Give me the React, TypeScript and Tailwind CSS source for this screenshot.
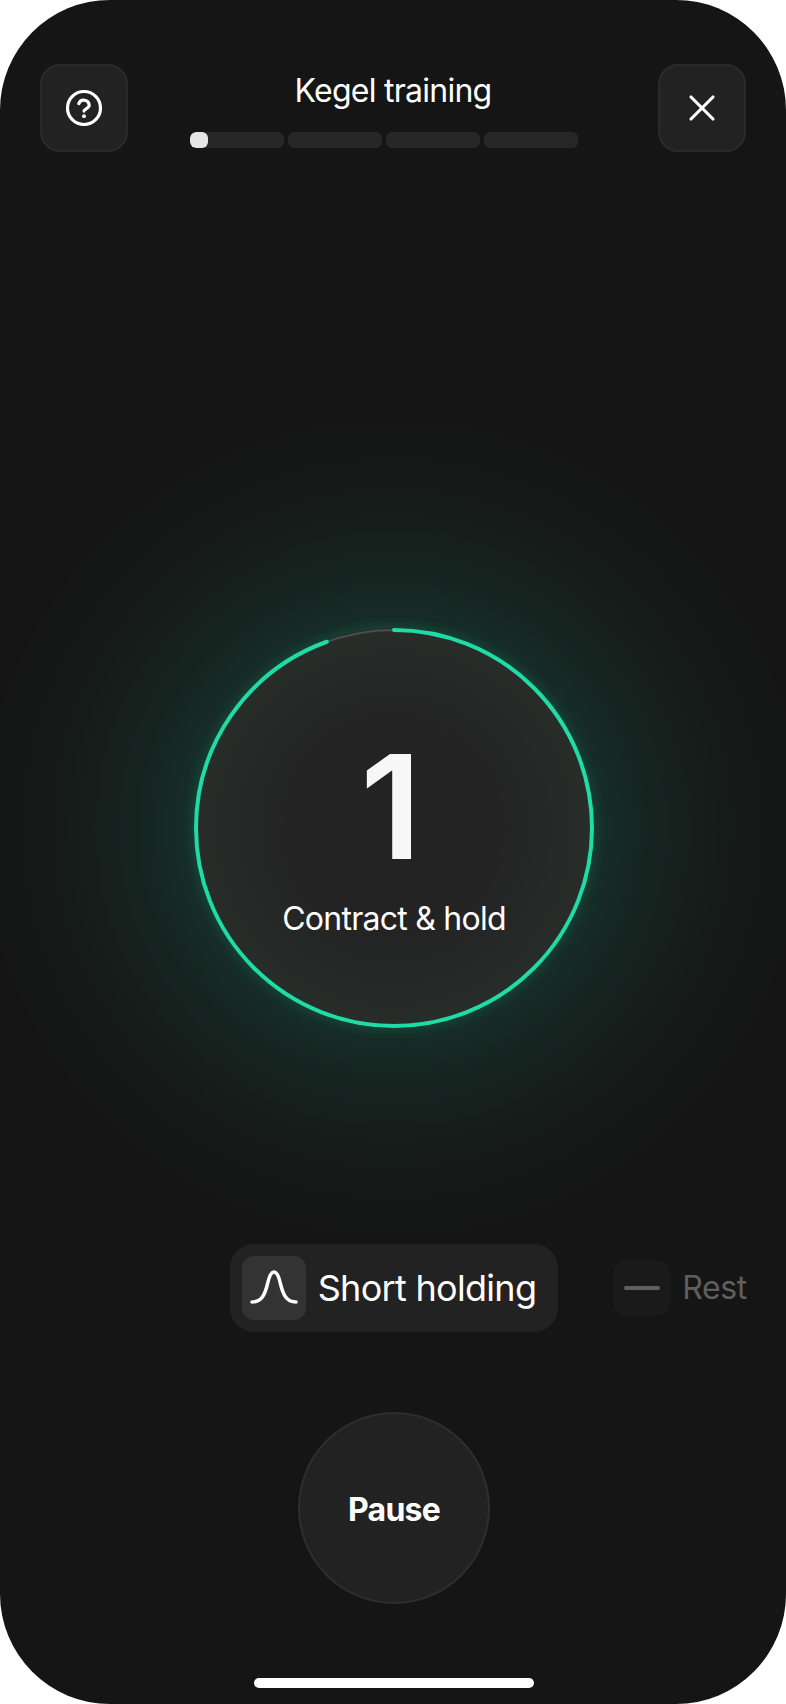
import { X } from 'lucide-react'
import React from 'react'

const segments = [0, 1, 2, 3]

function IconButton({ children }: { children: React.ReactNode }) {
  return (
    <button className="flex h-[88px] w-[88px] items-center justify-center rounded-[20px] border-2 border-[#2a2a2a] bg-[#222222] text-white">
      {children}
    </button>
  )
}

function HelpIcon() {
  return (
    <svg width="40" height="40" viewBox="0 0 40 40" fill="none" stroke="currentColor" strokeLinecap="round" strokeLinejoin="round">
      <circle cx="20" cy="20" r="16.5" strokeWidth="3.2" />
      <path d="M14.8 15.6a5.4 5.4 0 0 1 10.4 1.7c0 3.2-5.2 3.8-5.2 5.8" strokeWidth="3.2" />
      <circle cx="20" cy="28.2" r="1.9" fill="currentColor" stroke="none" />
    </svg>
  )
}

function PeakIcon() {
  return (
    <svg width="48" height="36" viewBox="0 0 48 36" fill="none" stroke="#ffffff" strokeWidth="3.5" strokeLinecap="round">
      <path d="M2 32C12 32 15 24 17.5 14C19 7 21 2 24 2C27 2 29 7 30.5 14C33 24 36 32 46 32" />
    </svg>
  )
}

function Ring() {
  return (
    <svg className="absolute inset-0" width="400" height="400" viewBox="0 0 400 400" fill="none">
      <circle cx="200" cy="200" r="198" stroke="#47504d" strokeWidth="2" />
      <circle
        cx="200"
        cy="200"
        r="198"
        stroke="#1fdca6"
        strokeWidth="4"
        strokeLinecap="round"
        strokeDasharray="1175 1244"
        transform="rotate(-90 200 200)"
      />
    </svg>
  )
}

export default function App() {
  return (
    <div className="flex h-[1704px] w-[786px] flex-col items-stretch bg-white font-['Inter',sans-serif]">
      <div className="flex h-full flex-col overflow-hidden rounded-[110px] bg-[#151515] pt-16 text-white">
        {/* Header */}
        <div className="flex items-start justify-between px-10">
          <IconButton>
            <HelpIcon />
          </IconButton>
          <div className="flex flex-col items-center">
            <div className="text-[32px] leading-[54px] tracking-[-0.75px]">Kegel training</div>
            <div className="mt-[14px] mr-[18px] flex gap-1">
              {segments.map((i) => (
                <div key={i} className="h-4 w-[94px] overflow-hidden rounded-md bg-[#272727]">
                  {i === 0 && <div className="h-4 w-[18px] rounded-md bg-[#e5e5e5]" />}
                </div>
              ))}
            </div>
          </div>
          <IconButton>
            <X size={44} strokeWidth={1.7} />
          </IconButton>
        </div>

        {/* Timer */}
        <div className="mt-[260px] flex h-[832px] items-center justify-center pl-[2px] bg-[radial-gradient(circle_at_center,rgba(31,220,166,0.13)_200px,rgba(31,220,166,0.08)_250px,rgba(31,220,166,0.03)_330px,rgba(31,220,166,0)_415px)]">
          <div className="relative h-[400px] w-[400px] rounded-full bg-[radial-gradient(closest-side,#232323_50%,#282d2a_100%)] shadow-[0_0_14px_rgba(31,220,166,0.2)]">
            <Ring />
            <div className="relative flex h-full flex-col items-center">
              <div className="mt-[91px] pr-[6px] text-[145px] leading-[176px] font-semibold text-[#f7f7f7]">1</div>
              <div className="mt-1 text-[32px] leading-[40px] tracking-[-0.75px]">Contract &amp; hold</div>
            </div>
          </div>
        </div>

        {/* Phases */}
        <div className="grid grid-cols-[1fr_auto_1fr] items-center pl-[2px]">
          <div />
          <div className="flex h-[88px] items-center gap-3 rounded-3xl bg-[#222222] pr-[22px] pl-3">
            <div className="flex h-16 w-16 items-center justify-center rounded-xl bg-[#333333]">
              <PeakIcon />
            </div>
            <span className="text-[36px] leading-[44px] tracking-[-0.7px]">Short holding</span>
          </div>
          <div className="flex items-center gap-3 pl-14">
            <div className="flex h-14 w-14 items-center justify-center rounded-xl bg-[#1a1a1a]">
              <div className="h-1 w-9 rounded-full bg-[#5f5f5f]" />
            </div>
            <span className="text-[32px] leading-[40px] tracking-[-0.4px] text-[#5f5f5f]">Rest</span>
          </div>
        </div>

        {/* Pause */}
        <div className="mt-20 flex justify-center pl-[2px]">
          <button className="h-[192px] w-[192px] rounded-full border-2 border-[#2e2e2e] bg-[#222222] pt-1 text-[32px] font-bold tracking-[-0.8px] text-white">
            Pause
          </button>
        </div>

        {/* Home indicator */}
        <div className="mt-[74px] flex justify-center pl-[2px]">
          <div className="h-[10px] w-[280px] rounded-full bg-white" />
        </div>
      </div>
    </div>
  )
}
